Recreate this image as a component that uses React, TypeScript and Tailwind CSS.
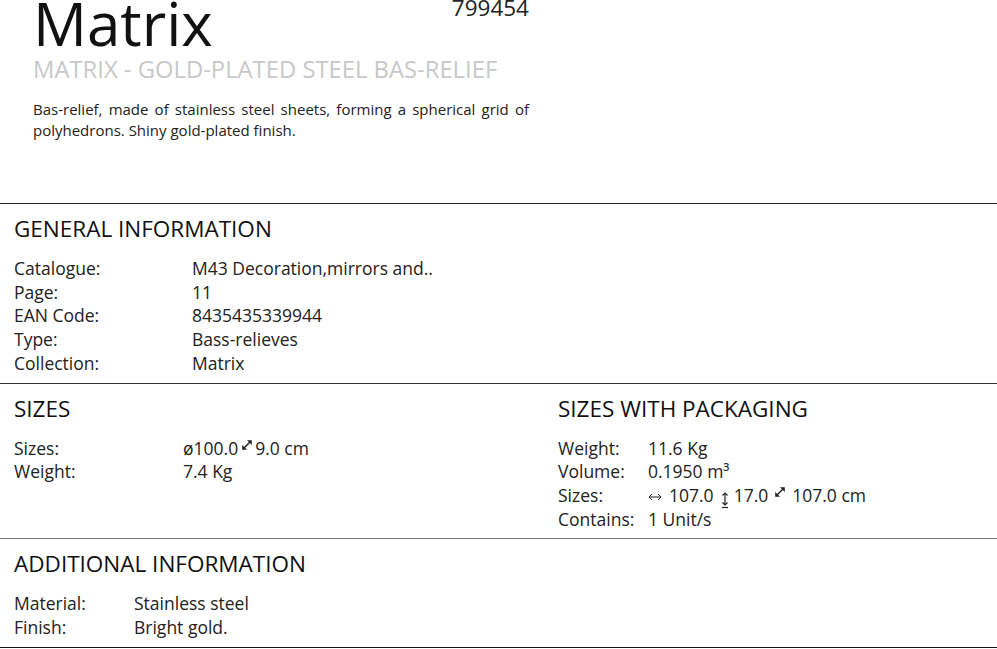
import React from "react";

type Row = { label: string; value: React.ReactNode };

function DiagArrow({ className }: { className: string }) {
  return (
    <svg
      width="10"
      height="10"
      viewBox="0 0 10 10"
      className={`inline-block -translate-y-[5px] align-middle ${className}`}
      aria-hidden="true"
    >
      <line x1="2" y1="8" x2="8" y2="2" stroke="#222" strokeWidth="1.5" />
      <polygon points="9.8,0.2 9.8,5 5,0.2" fill="#222" />
      <polygon points="0.2,9.8 0.2,5 5,9.8" fill="#222" />
    </svg>
  );
}

function HorizArrow() {
  return (
    <svg
      width="14"
      height="8"
      viewBox="0 0 14 8"
      className="mr-[7px] inline-block align-middle"
      aria-hidden="true"
    >
      <line x1="1" y1="4" x2="13" y2="4" stroke="#222" strokeWidth="1" />
      <polyline points="4,1 1,4 4,7" fill="none" stroke="#222" strokeWidth="1" />
      <polyline points="10,1 13,4 10,7" fill="none" stroke="#222" strokeWidth="1" />
    </svg>
  );
}

function VertArrow() {
  return (
    <svg
      width="8"
      height="17"
      viewBox="0 0 8 17"
      className="ml-[7px] mr-[5px] inline-block translate-y-[3px] align-middle"
      aria-hidden="true"
    >
      <line x1="4" y1="1" x2="4" y2="13" stroke="#222" strokeWidth="1.2" />
      <polyline points="1.5,3.5 4,1 6.5,3.5" fill="none" stroke="#222" strokeWidth="1.2" />
      <polyline points="1.5,10.5 4,13 6.5,10.5" fill="none" stroke="#222" strokeWidth="1.2" />
      <line x1="1" y1="15.5" x2="7" y2="15.5" stroke="#222" strokeWidth="1.2" />
    </svg>
  );
}

function InfoList({ rows, labelWidth }: { rows: Row[]; labelWidth: string }) {
  return (
    <dl className="text-[17.5px] leading-[23.7px] text-[#222]">
      {rows.map((r) => (
        <div key={r.label} className="flex">
          <dt className={`shrink-0 ${labelWidth}`}>{r.label}</dt>
          <dd className="whitespace-nowrap">{r.value}</dd>
        </div>
      ))}
    </dl>
  );
}

function SectionTitle({ children }: { children: React.ReactNode }) {
  return (
    <h2 className="text-[22.5px] leading-[28px] text-[#111]">{children}</h2>
  );
}

export default function App() {
  return (
    <div
      className="h-[649px] w-[997px] overflow-hidden bg-white"
      style={{ fontFamily: '"Open Sans", "Liberation Sans", sans-serif' }}
    >
      <header className="w-[529px] pb-[62px] pl-[33px]">
        <div className="flex items-start justify-between">
          <h1 className="-mt-[7px] text-[60px] leading-[60px] text-[#111]">
            Matrix
          </h1>
          <span className="-mt-[3px] text-[22.5px] leading-[22px] text-[#222]">
            799454
          </span>
        </div>
        <p className="mt-[4px] text-[23.8px] leading-[24px] text-[#c8c8c8]">
          MATRIX - GOLD-PLATED STEEL BAS-RELIEF
        </p>
        <p className="mt-[18px] text-justify text-[15px] leading-[21px] text-[#222]">
          Bas-relief, made of stainless steel sheets, forming a spherical grid
          of polyhedrons. Shiny gold-plated finish.
        </p>
      </header>

      <section className="border-t border-[#222] px-[14px] pb-[7px] pt-[11px]">
        <SectionTitle>GENERAL INFORMATION</SectionTitle>
        <div className="mt-[14px]">
          <InfoList
            labelWidth="w-[178px]"
            rows={[
              { label: "Catalogue:", value: "M43 Decoration,mirrors and.." },
              { label: "Page:", value: "11" },
              { label: "EAN Code:", value: "8435435339944" },
              { label: "Type:", value: "Bass-relieves" },
              { label: "Collection:", value: "Matrix" },
            ]}
          />
        </div>
      </section>

      <section className="flex border-t border-[#333] px-[14px] pb-[7px] pt-[11px]">
        <div className="w-[544px] shrink-0">
          <SectionTitle>SIZES</SectionTitle>
          <div className="mt-[14px]">
            <InfoList
              labelWidth="w-[169px]"
              rows={[
                {
                  label: "Sizes:",
                  value: (
                    <>
                      ø100.0
                      <DiagArrow className="ml-[4px] mr-[3px]" />
                      9.0 cm
                    </>
                  ),
                },
                { label: "Weight:", value: "7.4 Kg" },
              ]}
            />
          </div>
        </div>
        <div className="flex-1">
          <SectionTitle>SIZES WITH PACKAGING</SectionTitle>
          <div className="mt-[14px]">
            <InfoList
              labelWidth="w-[90px]"
              rows={[
                { label: "Weight:", value: "11.6 Kg" },
                { label: "Volume:", value: "0.1950 m³" },
                {
                  label: "Sizes:",
                  value: (
                    <>
                      <HorizArrow />
                      107.0
                      <VertArrow />
                      17.0
                      <DiagArrow className="mx-[7px]" />
                      107.0 cm
                    </>
                  ),
                },
                { label: "Contains:", value: "1 Unit/s" },
              ]}
            />
          </div>
        </div>
      </section>

      <section className="border-y border-t-[#777] border-b-[#111] px-[14px] pb-[7px] pt-[11px]">
        <SectionTitle>ADDITIONAL INFORMATION</SectionTitle>
        <div className="mt-[14px]">
          <InfoList
            labelWidth="w-[120px]"
            rows={[
              { label: "Material:", value: "Stainless steel" },
              { label: "Finish:", value: "Bright gold." },
            ]}
          />
        </div>
      </section>
    </div>
  );
}
